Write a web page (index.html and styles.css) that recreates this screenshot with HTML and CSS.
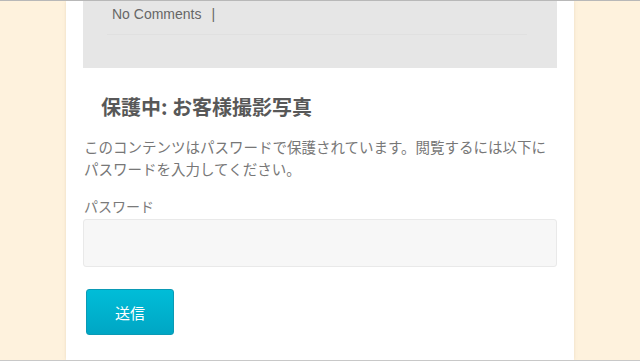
FILE: index.html
```html
<!DOCTYPE html>
<html lang="ja">
<head>
<meta charset="utf-8">
<link rel="stylesheet" href="styles.css">
</head>
<body>
<div class="page">
  <main class="column">
    <div class="meta">
      <div class="meta-line"><span>No Comments</span><span class="sep">|</span></div>
      <div class="meta-rule"></div>
    </div>
    <article class="post">
      <h1 class="title">保護中: お客様撮影写真</h1>
      <p class="notice">このコンテンツはパスワードで保護されています。閲覧するには以下にパスワードを入力してください。</p>
      <form class="pw-form">
        <label class="pw-label" for="pwbox">パスワード</label>
        <input class="pw-input" id="pwbox" type="password">
        <button class="submit" type="button">送信</button>
      </form>
    </article>
  </main>
</div>
</body>
</html>
```
FILE: styles.css
```css
html, body {
  margin: 0;
  padding: 0;
}
body {
  background: #fef2dd;
  font-family: "Noto Sans CJK JP", "Noto Sans", sans-serif;
}
.page {
  height: 359px;
  border-top: 1px solid #b8b8b8;
  border-bottom: 1px solid #c8c8c8;
  display: flex;
  justify-content: center;
  overflow: hidden;
}
.column {
  width: 474px;
  background: #fff;
  padding: 0 17px;
  box-shadow: 0 0 3px rgba(200, 180, 150, 0.35);
}
.meta {
  background: #e6e6e6;
  height: 67px;
  padding: 4px 0 0 29px;
  box-sizing: border-box;
}
.meta-line {
  font-family: "Liberation Sans", Arial, sans-serif;
  font-size: 14px;
  color: #666;
  line-height: 18px;
  display: flex;
  gap: 10px;
}
.meta-rule {
  margin-top: 11px;
  margin-right: 30px;
  margin-left: -5px;
  border-top: 1px solid #e0e0e0;
}
.post {
  padding-top: 24px;
}
.title {
  margin: 0 0 0 18px;
  font-size: 20px;
  font-weight: bold;
  color: #585858;
  line-height: 30px;
}
.notice {
  margin: 14px 0 0 1px;
  font-size: 14.5px;
  line-height: 22px;
  color: #777;
}
.pw-form {
  margin-top: 16px;
  display: flex;
  flex-direction: column;
  align-items: flex-start;
}
.pw-label {
  margin-left: 1px;
  font-size: 14px;
  line-height: 20px;
  color: #7a7a7a;
}
.pw-input {
  margin-top: 3px;
  width: 474px;
  height: 48px;
  box-sizing: border-box;
  background: #f7f7f7;
  border: 1px solid #e9e9e9;
  border-radius: 3px;
  outline: none;
}
.submit {
  margin: 22px 0 0 3px;
  width: 88px;
  height: 46px;
  border: 1px solid #0a9ab5;
  border-radius: 3px;
  background: linear-gradient(#00bdd8, #00a6c4);
  color: #fff;
  font-family: "Noto Sans CJK JP", sans-serif;
  font-size: 15px;
  padding: 0;
}
```
